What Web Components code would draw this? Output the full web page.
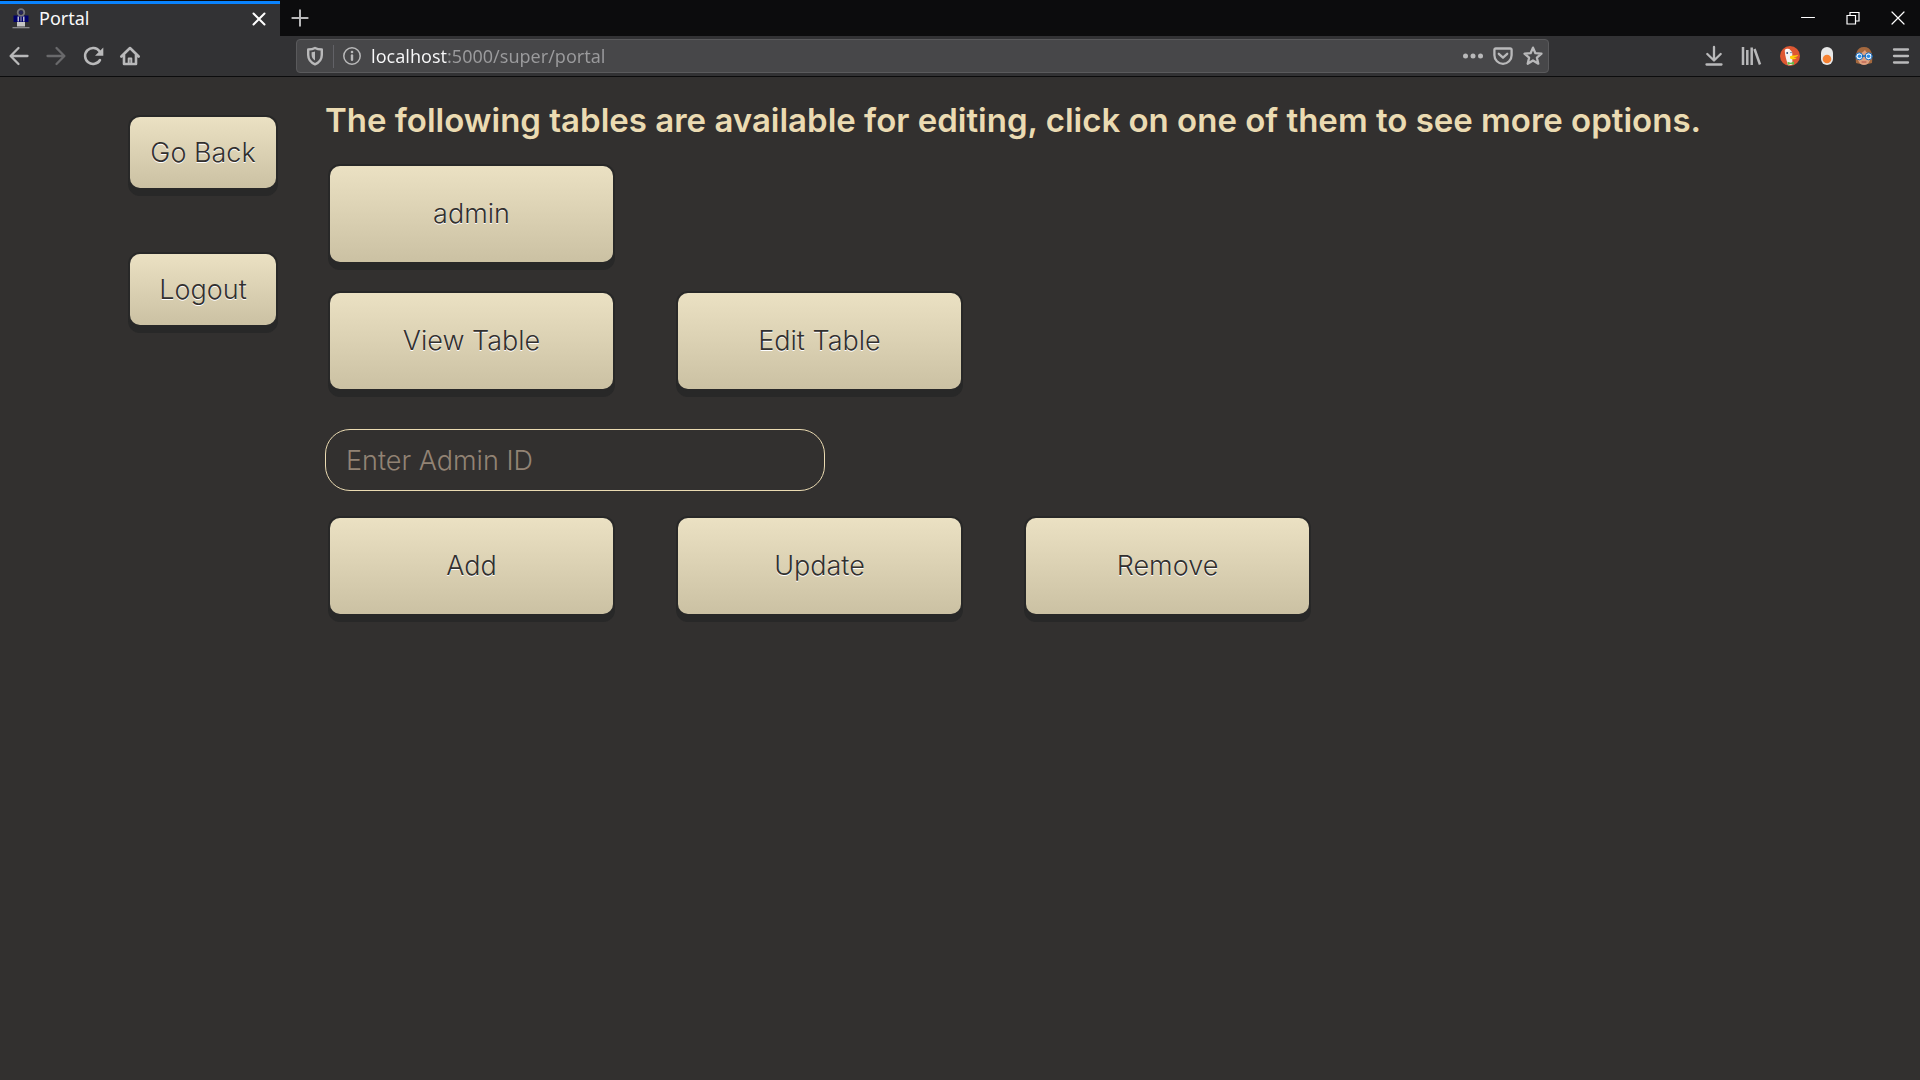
<!DOCTYPE html>
<html lang="en">
<head>
<meta charset="utf-8">
<title>Portal</title>
<style>
html, body { margin: 0; min-height: 100%; background: #32302f; }
</style>
</head>
<body>
<portal-browser></portal-browser>
<portal-page></portal-page>

<script>
const define = (name, markup) => {
  const template = document.createElement('template');
  template.innerHTML = markup;
  customElements.define(name, class extends HTMLElement {
    constructor() {
      super();
      this.attachShadow({ mode: 'open' }).append(template.content.cloneNode(true));
    }
  });
};

const ICONS = {
  back: '<path d="M18.5 10H2M9.5 2 1.6 10l7.9 8"/>',
  forward: '<path d="M1.5 10H18M10.5 2l7.9 8-7.900 8"/>',
  reload: '<path d="M17 14a8 8 0 1 1-.5-8.800" stroke-width="2.500"/><path d="M20.300 1.500v8.300H12z" fill="currentColor" stroke="none"/>',
  home: '<path d="M1.300 10.500 10 2l8.700 8.500M4 9v9h12V9" stroke-width="2.600"/><path d="M8.700 18v-5.500h2.600V18" stroke-width="2"/>',
  shield: '<path d="M10 2c2 1.200 4.300 1.500 6.800 1.500V9c0 4.500-2.700 7.500-6.800 9.300C5.900 16.500 3.200 13.500 3.200 9V3.500C5.700 3.500 8 3.200 10 2z" stroke-width="2.400"/><path d="M10 5.500v9C7.600 13 6.600 11.300 6.600 9V6.300c1.200 0 2.300-.2 3.400-.8z" fill="currentColor" stroke="none"/>',
  info: '<circle cx="10" cy="10" r="8.200" stroke-width="1.500"/><path d="M10 9.500v4.300" stroke-width="2.400"/><circle cx="10" cy="6" r="1.300" fill="currentColor" stroke="none"/>',
  dots: '<g fill="currentColor" stroke="none"><circle cx="2.500" cy="10" r="2.500"/><circle cx="10" cy="10" r="2.500"/><circle cx="17.500" cy="10" r="2.500"/></g>',
  pocket: '<path d="M2.700 2.500h14.600a1.300 1.300 0 0 1 1.300 1.300v5.400a8.600 8.600 0 0 1-17.200 0V3.800a1.300 1.300 0 0 1 1.300-1.300zM5.800 7.800 10 11.700l4.200-3.900"/>',
  star: '<path d="m10 1.600 2.400 5.600 6.100.5-4.600 4 1.400 6-5.300-3.200-5.300 3.200 1.400-6-4.600-4 6.100-.5z"/>',
  download: '<path d="M10 1v12.500M3.300 8 10 14.500 16.700 8M2.500 18.500h15"/>',
  library: '<g stroke-linecap="butt"><path d="M2 1v18M6.300 4v15M10.700 1.500V19" stroke-width="2.500"/><path d="m13.500 3 5.500 15.500" stroke-width="2.500"/></g>',
  menu: '<path d="M3 3.500h14M3 10h14M3 16.500h14"/>',
  close: '<path d="m4.500 4.500 11 11m0-11-11 11" stroke-width="2"/>',
  plus: '<path d="M10 1.500v17M1.500 10h17" stroke-width="2.200"/>',
  minimize: '<path d="M3.500 9.500h13" stroke-width="1"/>',
  restore: '<path d="M4 7.500h8.500V16H4zM7 7.500v-3h9V13h-3.500" stroke-width="1.200" stroke-linejoin="miter"/>',
  exit: '<path d="m4 4 12 12m0-12L4 16" stroke-width="1.200"/>',
  site: '<g stroke="none"><path d="M2.500 6.500h15V13h-15z" fill="#00006b"/><circle cx="10" cy="3.500" r="3.300" fill="none" stroke="#77777d" stroke-width="1.800"/><circle cx="10" cy="3.500" r="2" fill="#25255d"/><path d="M6.500 7.500h1.500v5H6.500zM12 7.500h1.500v5H12z" fill="#b9b9c9"/><path d="M9 7.500h2v5H9z" fill="#55558f"/><path d="M6 13h8v4.500H6z" fill="#c5c5c5"/><path d="M1.500 18h17v1.300h-17z" fill="#89898b"/></g>',
  duck: '<g stroke="none"><circle cx="10" cy="10" r="10" fill="#de5833"/><path d="M4.800 5c.6-2.500 6-2.600 7.300 1.200.5 2 0 4 .2 6l.2 6.500-4.500.6C7 15 4.800 10 4.800 5z" fill="#f4f4f4"/><path d="M4.500 4.200c1.500-1.500 4-1.800 5.700-.8L7 5z" fill="#fff"/><circle cx="7.200" cy="7" r=".9" fill="#26466f"/><circle cx="11" cy="6.600" r=".7" fill="#26466f"/><path d="M10 10.300c2-1.500 5-.3 8-1.200.3 1.200-2 2-4.500 2.400 1.300.3 2.700 0 3.200.4-1 1.500-5 2-6.700.4z" fill="#fdd20a"/><path d="m7.500 15.700 3.300 1 3.200-1.300v3.400l-3.200-.8-3 1z" fill="#65bc46"/></g>',
  toggle: '<g stroke="none"><rect x="4" y="1" width="12" height="18" rx="6" fill="#e8e8e8"/><circle cx="10" cy="13" r="4.300" fill="#f58132"/></g>',
  face: '<g stroke="none"><path d="M2 17C1 8 2.500 1 10 1s9 7 8 16l-4 1H6z" fill="#a4683e"/><path d="M4 8.500c3-1 5-2.500 7-4.500 1 2 2.500 3.300 5 4.500V14c-.8 3-3 5-6 5s-5-2-6-5z" fill="#dfa07e"/><circle cx="5.300" cy="10.300" r="3.500" fill="#edf5ff" stroke="#1769b8" stroke-width="1"/><circle cx="14.700" cy="10.300" r="3.500" fill="#edf5ff" stroke="#1769b8" stroke-width="1"/><path d="M8.500 10h3" stroke="#1769b8" stroke-width="1.500"/><circle cx="5.500" cy="10.300" r="1.800" fill="#278be5"/><circle cx="14.500" cy="10.300" r="1.800" fill="#278be5"/><path d="M8 16h4" stroke="#b24c42" stroke-width="1"/></g>'
};

customElements.define('line-icon', class extends HTMLElement {
  constructor() {
    super();
    this.attachShadow({ mode: 'open' });
  }
  connectedCallback() {
    this.shadowRoot.innerHTML = `
      <style>
        :host { display: block; width: 20px; height: 20px; flex: none; }
        svg { display: block; width: 100%; height: 100%; overflow: visible; }
      </style>
      <svg viewBox="0 0 20 20" fill="none" stroke="currentColor" stroke-width="2.300"
        stroke-linecap="round" stroke-linejoin="round" aria-hidden="true">${ICONS[this.getAttribute('name')]}</svg>`;
  }
});

define('portal-browser', `
  <style>
    :host { display: block; font: 18px/24px "Noto Sans", sans-serif; color: #f9f9fa; background: #0c0c0d; }
    button { display: grid; place-items: center; margin: 0; padding: 0; border: 0; background: none; color: #b9b9ba; flex: none; }
    .tabs { display: flex; height: 36px; }
    .tab { box-sizing: border-box; width: 280px; margin-top: 1px; padding: 0 11px 2px; border-top: 3px solid #0a84ff;
      background: #323234; display: flex; align-items: center; gap: 8px; }
    .tab span { flex: 1; padding-bottom: 2px; }
    .tab button, .window button { color: #fff; }
    .new { width: 40px; }
    .new line-icon { width: 18px; height: 18px; }
    .window { display: flex; margin-left: auto; }
    .window button { width: 45px; }
    .tools { display: flex; align-items: center; height: 40px; padding: 0 1px 0 0; background: #323234; border-bottom: 1px solid #0c0c0d; }
    .tools button { width: 37px; height: 36px; }
    .nav, .actions { display: flex; flex: none; }
    .actions { margin-left: auto; }
    .extensions { display: flex; margin-left: 2px; }
    .tools button:disabled { color: #69696b; }
    .address { box-sizing: border-box; flex: 0 1 1253px; min-width: 300px; height: 34px; margin: 0 40px 0 148px;
      padding: 0 5px 0 8px; border: 1px solid #5a5a5c; border-radius: 4px; background: #474749; display: flex; align-items: center; }
    .address button { width: 20px; }
    .identity { display: flex; align-items: center; gap: 8px; color: #b9b9ba; }
    .identity::before { content: ""; order: 1; width: 1px; height: 23px; background: #626267; }
    .identity button:last-child { order: 2; }
    .page-actions { display: flex; gap: 10px; }
    input { box-sizing: border-box; flex: 1; min-width: 0; height: 30px; margin: 0 9px; padding: 0; border: 0; outline: 0; font: inherit; color: #f9f9fa;
      background: linear-gradient(90deg, #f9f9fa 77px, #9b9b9d 77px); background-clip: text; -webkit-background-clip: text;
      -webkit-text-fill-color: transparent; }
  </style>
  <div class="tabs">
    <div class="tab"><line-icon name="site"></line-icon><span>Portal</span>
      <button aria-label="Close tab"><line-icon name="close"></line-icon></button></div>
    <button class="new" aria-label="New tab"><line-icon name="plus"></line-icon></button>
    <div class="window">
      <button aria-label="Minimize"><line-icon name="minimize"></line-icon></button>
      <button aria-label="Restore"><line-icon name="restore"></line-icon></button>
      <button aria-label="Close"><line-icon name="exit"></line-icon></button>
    </div>
  </div>
  <div class="tools">
    <div class="nav">
      <button aria-label="Back"><line-icon name="back"></line-icon></button>
      <button aria-label="Forward" disabled><line-icon name="forward"></line-icon></button>
      <button aria-label="Reload"><line-icon name="reload"></line-icon></button>
      <button aria-label="Home"><line-icon name="home"></line-icon></button>
    </div>
    <div class="address">
      <div class="identity">
        <button aria-label="Protection"><line-icon name="shield"></line-icon></button>
        <button aria-label="Site information"><line-icon name="info"></line-icon></button>
      </div>
      <input type="text" aria-label="Address" value="localhost:5000/super/portal" spellcheck="false">
      <div class="page-actions">
        <button aria-label="Page actions"><line-icon name="dots"></line-icon></button>
        <button aria-label="Save to Pocket"><line-icon name="pocket"></line-icon></button>
        <button aria-label="Bookmark"><line-icon name="star"></line-icon></button>
      </div>
    </div>
    <div class="actions">
      <button aria-label="Downloads"><line-icon name="download"></line-icon></button>
      <button aria-label="Library"><line-icon name="library"></line-icon></button>
      <div class="extensions">
        <button aria-label="Privacy"><line-icon name="duck"></line-icon></button>
        <button aria-label="Toggle"><line-icon name="toggle"></line-icon></button>
        <button aria-label="Profile"><line-icon name="face"></line-icon></button>
        <button aria-label="Menu"><line-icon name="menu"></line-icon></button>
      </div>
    </div>
  </div>`);

define('portal-button', `
  <style>
    :host { display: block; }
    button { box-sizing: border-box; display: block; width: 100%; height: var(--button-height, 96px); margin: 0; padding: 0; border: 0; border-radius: 10px;
      background: linear-gradient(#ebe1c3, #cbc1a3); box-shadow: 0 0 0 2px #282828, 0 6px 0 2px #282828;
      color: #32302f; font: inherit; text-shadow: 0 1px 0 #fff; cursor: pointer; }
  </style>
  <button type="button"><slot></slot></button>`);

define('portal-field', `
  <style>
    :host { display: block; }
    input { box-sizing: border-box; display: block; width: 100%; height: 62px; margin: 0; padding: 0 20px; border: 1px solid #ebdbb2;
      border-radius: 25px; outline: 0; background: none; color: #ebdbb2; font: inherit; }
    input::placeholder { color: #928374; opacity: 1; }
  </style>
  <input type="text" placeholder="Enter Admin ID" aria-label="Enter Admin ID">`);

define('portal-page', `
  <style>
    :host { display: flex; color: #ebdbb2; font: 300 27px/32px Inter, sans-serif; }
    nav { box-sizing: border-box; flex: none; width: 325px; padding: 40px 49px 0 130px; display: flex; flex-direction: column; gap: 66px; --button-height: 71px; }
    main { flex: 1; min-width: 0; padding: 23px 20px 40px 0; }
    h1 { margin: 0 0 26px; font-size: 33px; line-height: 40px; font-weight: 600; }
    .row { display: grid; grid-template-columns: repeat(4, minmax(0, 283px)); gap: 65px; margin: 0 0 31px 5px; }
    portal-field { max-width: 500px; margin: 40px 0 27px; }
  </style>
  <nav aria-label="Session">
    <portal-button>Go Back</portal-button>
    <portal-button>Logout</portal-button>
  </nav>
  <main>
    <h1>The following tables are available for editing, click on one of them to see more options.</h1>
    <div class="row"><portal-button>admin</portal-button></div>
    <div class="row"><portal-button>View Table</portal-button><portal-button>Edit Table</portal-button></div>
    <portal-field></portal-field>
    <div class="row"><portal-button>Add</portal-button><portal-button>Update</portal-button><portal-button>Remove</portal-button></div>
  </main>`);
</script>
</body>
</html>
